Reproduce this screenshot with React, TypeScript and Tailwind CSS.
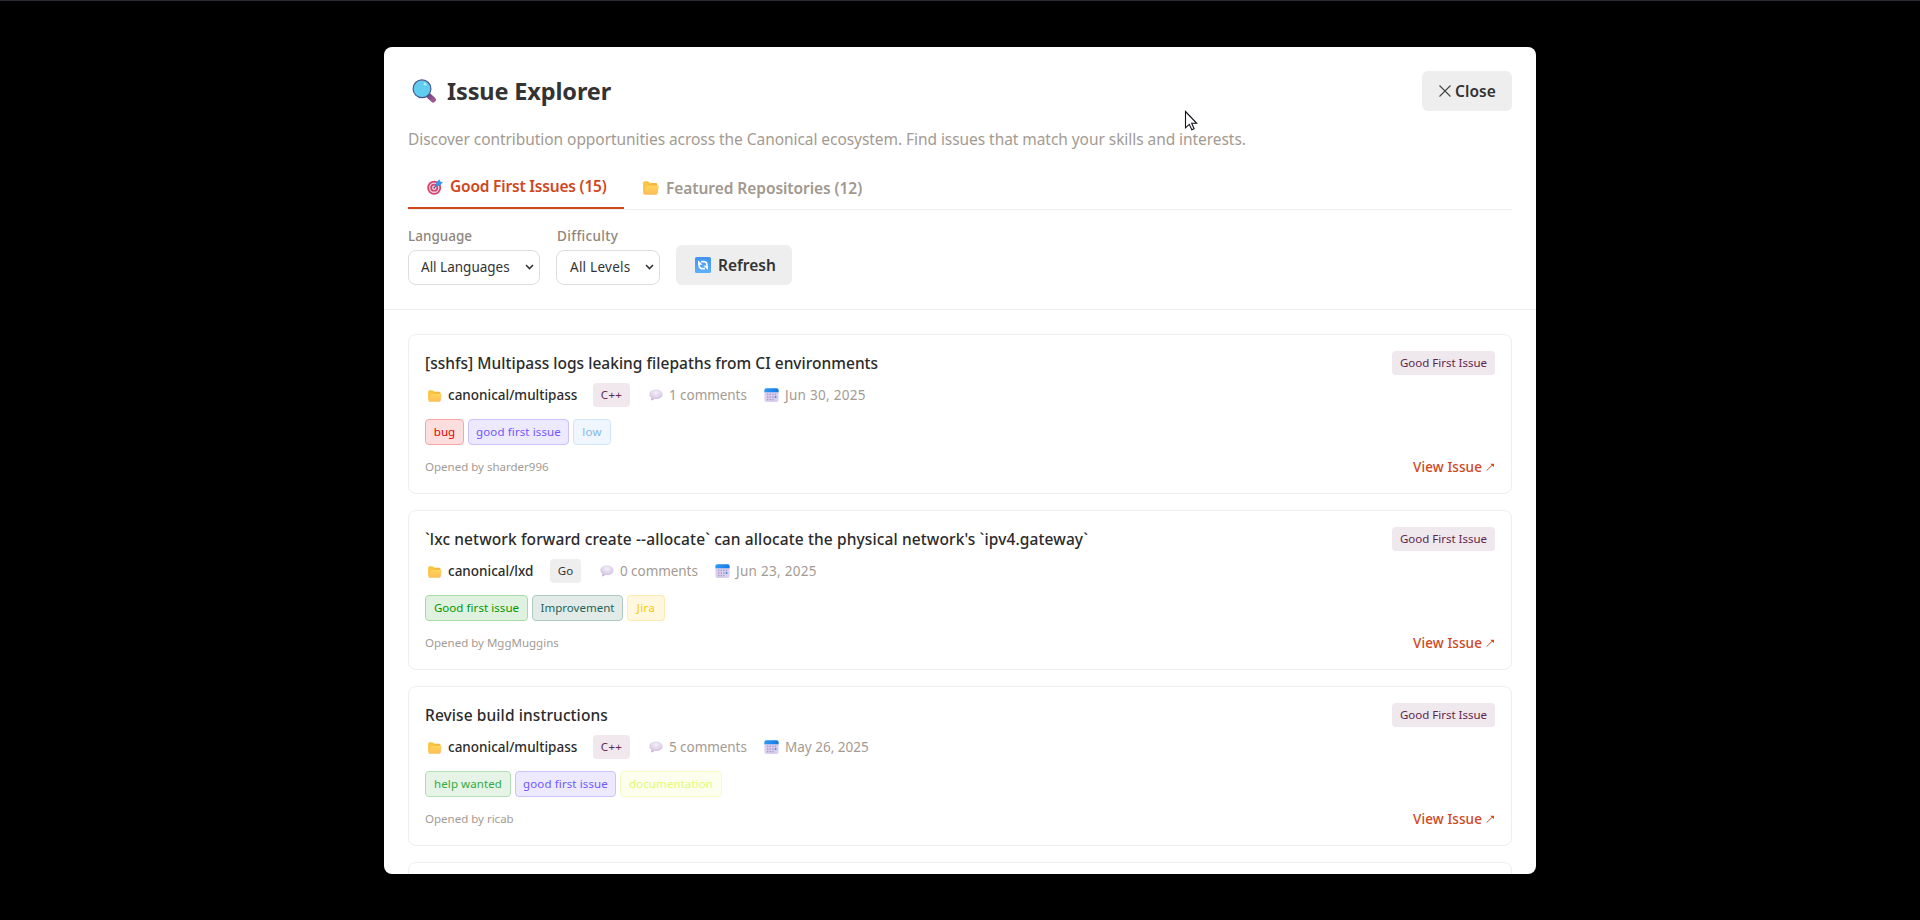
import type { ReactNode } from "react";

function SearchIcon() {
  return (
    <svg className="h-[24px] w-[25px] shrink-0" viewBox="0 0 25 24">
      <defs>
        <linearGradient id="handle" x1="0" y1="0" x2="1" y2="1">
          <stop offset="0" stopColor="#6b4a86" />
          <stop offset="1" stopColor="#a3568f" />
        </linearGradient>
      </defs>
      <path d="M16.5 16.5 L21.2 20.8" stroke="url(#handle)" strokeWidth="5.4" strokeLinecap="round" />
      <circle cx="10" cy="9.8" r="8.9" fill="#60cdee" stroke="#46568f" strokeWidth="1.2" />
      <circle cx="13" cy="5.2" r="1.4" fill="#b9ecfb" />
    </svg>
  );
}

function TargetIcon() {
  return (
    <svg className="h-4 w-4 shrink-0" viewBox="0 0 16 16">
      <circle cx="7.2" cy="8.7" r="7" fill="#d6446f" />
      <circle cx="7.2" cy="8.7" r="5.2" fill="#f0d3e0" />
      <circle cx="7.2" cy="8.7" r="3.9" fill="#d6446f" />
      <circle cx="7.2" cy="8.7" r="2.2" fill="#f6dbe6" />
      <circle cx="7.2" cy="8.7" r="1" fill="#d6446f" />
      <path d="M7.2 8.7 L12 4" stroke="#3b6fb8" strokeWidth="1.1" />
      <path d="M9 4 L12.4 0.2 L13.2 2.6 L15.9 3.3 L12.4 6.9 L9.4 6.7 Z" fill="#2f9bea" />
    </svg>
  );
}

function FolderIcon({ className }: { className: string }) {
  return (
    <svg className={className} viewBox="0 0 16 14">
      <defs>
        <linearGradient id="folder" x1="0" y1="0" x2="0" y2="1">
          <stop offset="0" stopColor="#ffd75a" />
          <stop offset="1" stopColor="#fdbb58" />
        </linearGradient>
      </defs>
      <path d="M0.3 2 Q0.3 0.5 1.8 0.5 H5 L6.8 2 H13 Q14.3 2 14.3 3.4 V12 H0.3 Z" fill="#f8b63a" />
      <path d="M0.3 13 L2.6 5.6 Q3 4.4 4.2 4.4 H14.8 Q16 4.4 15.8 5.6 L14.6 12.2 Q14.3 13.8 12.8 13.8 H1.6 Q0.3 13.8 0.3 12.6 Z" fill="url(#folder)" />
      <path d="M0.3 2 Q0.3 0.5 1.8 0.5 H5 L6.8 2 H9 L3.4 5 L0.3 12 Z" fill="#fbc544" />
    </svg>
  );
}

function BubbleIcon() {
  return (
    <svg className="h-[12px] w-[14px] shrink-0" viewBox="0 0 14 12">
      <defs>
        <radialGradient id="bubble" cx="0.5" cy="0.3" r="0.75">
          <stop offset="0" stopColor="#f4eff9" />
          <stop offset="0.6" stopColor="#ddd0ea" />
          <stop offset="1" stopColor="#b9a5d0" />
        </radialGradient>
      </defs>
      <path d="M7 0.6 C10.7 0.6 13.5 2.5 13.5 5.2 C13.5 8 10.7 10 7.2 10 C6.5 10 5.9 9.900 5.300 9.800 C4.300 10.800 3 11.300 1.800 11.300 C2.400 10.600 2.600 9.600 2.300 8.600 C1.100 7.700 0.400 6.500 0.400 5.200 C0.400 2.500 3.300 0.600 7 0.600 Z" fill="url(#bubble)" />
    </svg>
  );
}

function CalendarIcon() {
  return (
    <svg className="h-[14px] w-[15px] shrink-0" viewBox="0 0 15 14">
      <defs>
        <linearGradient id="calendar-top" x1="0" y1="0" x2="1" y2="0">
          <stop offset="0" stopColor="#2f9af5" />
          <stop offset="1" stopColor="#1577e6" />
        </linearGradient>
      </defs>
      <rect x="0.4" y="1" width="14.2" height="12.9" rx="2" fill="#dccfee" />
      <path d="M0.4 4.2 V2 Q0.4 0.2 2.4 0.2 H12.6 Q14.6 0.2 14.6 2 V4.2 Z" fill="url(#calendar-top)" />
      <g fill="#a99dc6">
        <rect x="3" y="5.600" width="1.400" height="1.500" />
        <rect x="5.600" y="5.600" width="1.400" height="1.500" />
        <rect x="8.200" y="5.600" width="1.400" height="1.500" />
        <rect x="10.800" y="5.600" width="1.400" height="1.500" />
        <rect x="3" y="8.200" width="1.400" height="1.500" />
        <rect x="5.600" y="8.200" width="1.400" height="1.500" />
        <rect x="8.200" y="8.200" width="1.400" height="1.500" />
        <rect x="3" y="10.800" width="1.400" height="1.500" />
        <rect x="5.600" y="10.800" width="1.400" height="1.500" />
        <rect x="8.200" y="10.800" width="1.400" height="1.500" />
      </g>
      <rect x="10.700" y="8.100" width="1.700" height="1.800" fill="#2f8df0" />
    </svg>
  );
}

function RefreshIcon() {
  return (
    <svg className="h-4 w-4 shrink-0" viewBox="0 0 16 16">
      <defs>
        <linearGradient id="refresh" x1="0" y1="0" x2="0" y2="1">
          <stop offset="0" stopColor="#3f93ee" />
          <stop offset="1" stopColor="#5cb0fb" />
        </linearGradient>
      </defs>
      <rect width="16" height="16" rx="1.6" fill="url(#refresh)" />
      <g fill="none" stroke="#fff" strokeWidth="1.7">
        <path d="M6 4.6 H9.2 Q11.9 4.8 12 8.6" />
        <path d="M10 11.6 H6.8 Q4.1 11.4 4 7.6" />
      </g>
      <path d="M3 3.2 V7.8 H7.6 Z" fill="#fff" />
      <path d="M13 13 V8.4 H8.4 Z" fill="#fff" />
    </svg>
  );
}

function Chevron() {
  return (
    <svg className="h-[6px] w-[9px] shrink-0" viewBox="0 0 9 6">
      <path d="M1 1 L4.5 4.6 L8 1" fill="none" stroke="#333" strokeWidth="1.5" />
    </svg>
  );
}

function ArrowIcon() {
  return (
    <svg className="h-[8px] w-[9px] shrink-0" viewBox="0 0 9 8">
      <path d="M0.6 7.5 L7 1.500" fill="none" stroke="#d0471b" strokeWidth="0.95" />
      <path d="M4.3 0.7 H8 V4.2 Z" fill="#d0471b" />
    </svg>
  );
}

function Cursor() {
  return (
    <svg className="absolute left-[1184px] top-[109px] h-[21px] w-[14px]" viewBox="0 0 14 21">
      <path d="M1.5 1.5 V17.8 L5.3 14.3 L7.8 19.7 L10.1 18.7 L7.7 13.3 H12.7 Z" fill="#fff" stroke="#15131f" strokeWidth="1.1" />
    </svg>
  );
}

function Select({ className, children }: { className: string; children: ReactNode }) {
  return (
    <div className={`mt-1 flex h-[35px] items-center justify-between rounded-lg border border-[#dddddd] pr-[5px] pb-px leading-5 text-[#333] ${className}`}>
      {children}
      <Chevron />
    </div>
  );
}

type Tag = { text: string; style: string };

type Issue = {
  title: ReactNode;
  repo: string;
  repoWidth: string;
  lang: string;
  langStyle: string;
  comments: number;
  date: ReactNode;
  tags: Tag[];
  author: string;
};

const gfi = "w-[101px] tracking-[0.12px] text-[#7057ff] bg-[#ede9ff] border-[#cbc2ff]";
const cpp = "w-[37px] tracking-[0.3px] bg-[#f1e8ee] text-[#5e2750]";

const issues: Issue[] = [
  {
    title: <span className="tracking-[0.02px]">[sshfs] Multipass logs leaking filepaths from CI environments</span>,
    repo: "canonical/multipass",
    repoWidth: "w-[152px]",
    lang: "C++",
    langStyle: cpp,
    comments: 1,
    date: <span className="tracking-[0.28px]">Jun 30, 2025</span>,
    tags: [
      { text: "bug", style: "w-[39px] text-[#e60000] bg-[#fddede] border-[#f9a5a5]" },
      { text: "good first issue", style: gfi },
      { text: "low", style: "w-[38px] tracking-[0.25px] text-[#84b6eb] bg-[#f0f6fe] border-[#d3e5f8]" },
    ],
    author: "sharder996",
  },
  {
    title: (
      <span className="tracking-[0.116px]">
        `lxc network forward create --allocate` can allocate the physical network's `ipv4.gateway`
      </span>
    ),
    repo: "canonical/lxd",
    repoWidth: "w-[109px]",
    lang: "Go",
    langStyle: "w-[31px] bg-[#eeeeee] text-[#333] tracking-[0.2px]",
    comments: 0,
    date: <span className="tracking-[0.28px]">Jun 23, 2025</span>,
    tags: [
      { text: "Good first issue", style: "w-[103px] tracking-[0.06px] text-[#009800] bg-[#dff2df] border-[#a6dba6]" },
      { text: "Improvement", style: "w-[91px] text-[#1d6455] bg-[#e3ebe9] border-[#aec8c2]" },
      { text: "Jira", style: "w-[38px] tracking-[0.4px] text-[#fbca04] bg-[#fff8df] border-[#feebaa]" },
    ],
    author: "MggMuggins",
  },
  {
    title: <span className="tracking-[0.09px]">Revise build instructions</span>,
    repo: "canonical/multipass",
    repoWidth: "w-[152px]",
    lang: "C++",
    langStyle: cpp,
    comments: 5,
    date: <span>May 26, 2025</span>,
    tags: [
      { text: "help wanted", style: "w-[86px] tracking-[0.08px] text-[#33aa3f] bg-[#e6f4e7] border-[#b3deb8]" },
      { text: "good first issue", style: gfi },
      { text: "documentation", style: "w-[102px] tracking-[0.08px] text-[#e4fb6b] bg-[#fcffee] border-[#f5fdc8]" },
    ],
    author: "ricab",
  },
];

function IssueCard({ issue }: { issue: Issue }) {
  return (
    <article className="h-[160px] shrink-0 rounded-lg border border-[#eeeeee] p-4">
      <div className="flex h-6 justify-between">
        <h3 className="text-[15.5px] leading-6 font-medium text-[#2b2b2b]">{issue.title}</h3>
        <span className="flex h-6 w-[103px] items-center justify-center rounded bg-[#efe8ec] pb-px text-[11.5px] text-[#5e2750]">
          Good First Issue
        </span>
      </div>
      <div className="mt-2 flex h-6 items-center gap-4 text-[13.5px] text-[#a39b93]">
        <div className={`flex items-center gap-[6px] pl-[3px] ${issue.repoWidth}`}>
          <FolderIcon className="mt-0.5 h-[12px] w-[14px] shrink-0" />
          <span className="leading-6 font-medium text-[#2b2b2b]">{issue.repo}</span>
        </div>
        <span className={`flex h-6 items-center justify-center rounded text-[11.5px] ${issue.langStyle}`}>{issue.lang}</span>
        <div className="flex w-[100px] items-center gap-[6px] pl-[3px]">
          <BubbleIcon />
          <span className="leading-6 tracking-[-0.06px]">{issue.comments} comments</span>
        </div>
        <div className="flex items-center gap-[6px] pl-[2px]">
          <CalendarIcon />
          <span className="leading-6">{issue.date}</span>
        </div>
      </div>
      <div className="mt-3 flex h-[26px] gap-1">
        {issue.tags.map((tag) => (
          <span key={tag.text} className={`flex items-center justify-center rounded border pb-px text-[11.5px] ${tag.style}`}>
            {tag.text}
          </span>
        ))}
      </div>
      <div className="mt-3 flex h-5 items-center justify-between">
        <span className="text-[11.5px] text-[#a39b93]">Opened by {issue.author}</span>
        <span className="flex items-center gap-1 text-[13.5px] leading-5 font-medium tracking-[0.1px] text-[#d0471b]">
          View Issue
          <ArrowIcon />
        </span>
      </div>
    </article>
  );
}

export default function App() {
  return (
    <div className="relative flex h-[920px] w-[1920px] justify-center overflow-hidden border-t border-[#2c2c33] bg-black pt-[46px] font-['Noto_Sans',sans-serif] whitespace-nowrap">
      <div className="flex h-[827px] w-[1152px] flex-col overflow-hidden rounded-lg bg-white">
        <header className="h-[263px] shrink-0 border-b border-[#eeeeee] p-6">
          <div className="flex h-10 items-center justify-between">
            <div className="flex items-center gap-[10px] pl-1">
              <SearchIcon />
              <h2 className="text-[23.5px] leading-10 font-bold tracking-[-0.14px] text-[#333]">Issue Explorer</h2>
            </div>
            <button className="flex h-10 w-[90px] items-center gap-1 rounded-md bg-[#eeeeee] pl-[17px] text-[15.5px] font-semibold text-[#333]">
              <svg className="h-3 w-3 shrink-0" viewBox="0 0 12 12">
                <path d="M0.5 0.5 L11.5 11.5 M11.5 0.5 L0.5 11.5" stroke="#444" strokeWidth="1.1" />
              </svg>
              <span className="pt-0.5 tracking-[0.05px]">Close</span>
            </button>
          </div>
          <p className="mt-4 text-[15.5px] leading-6 tracking-[-0.06px] text-[#a39b93]">
            Discover contribution opportunities across the Canonical ecosystem. Find issues that match your skills and interests.
          </p>
          <nav className="mt-4 flex h-[43px] border-b border-[#eeeeee] text-[15.5px] font-semibold">
            <div className="flex h-[42px] w-[216px] items-center border-b-2 border-[#d0471b] pl-[19px] text-[#d0471b]">
              <TargetIcon />
              <span className="ml-[7px] tracking-[-0.2px]">Good First Issues (15)</span>
            </div>
            <div className="flex h-[42px] items-center pl-[19px] text-[#a1988f]">
              <FolderIcon className="h-[14px] w-4 shrink-0" />
              <span className="ml-[7px] pt-0.5 tracking-[-0.06px]">Featured Repositories (12)</span>
            </div>
          </nav>
          <div className="mt-4 flex items-end gap-4 text-[13.5px]">
            <div className="w-[132px]">
              <div className="leading-5 font-medium text-[#8f867d]">Language</div>
              <Select className="pl-[12px]">All Languages</Select>
            </div>
            <div className="w-[104px]">
              <div className="pl-px leading-5 font-medium tracking-[0.35px] text-[#8f867d]">Difficulty</div>
              <Select className="pl-[13px] tracking-[0.25px]">All Levels</Select>
            </div>
            <button className="flex h-10 w-[116px] items-center gap-[7px] rounded-md bg-[#eeeeee] pl-[19px] text-[15.5px] font-semibold text-[#333]">
              <RefreshIcon />
              <span className="pt-px tracking-[0.02px]">Refresh</span>
            </button>
          </div>
        </header>
        <main className="flex flex-1 flex-col gap-4 overflow-hidden p-6 pb-0">
          {issues.map((issue, i) => (
            <IssueCard key={i} issue={issue} />
          ))}
          <div className="h-[160px] shrink-0 rounded-lg border border-[#eeeeee]" />
        </main>
      </div>
      <Cursor />
    </div>
  );
}
